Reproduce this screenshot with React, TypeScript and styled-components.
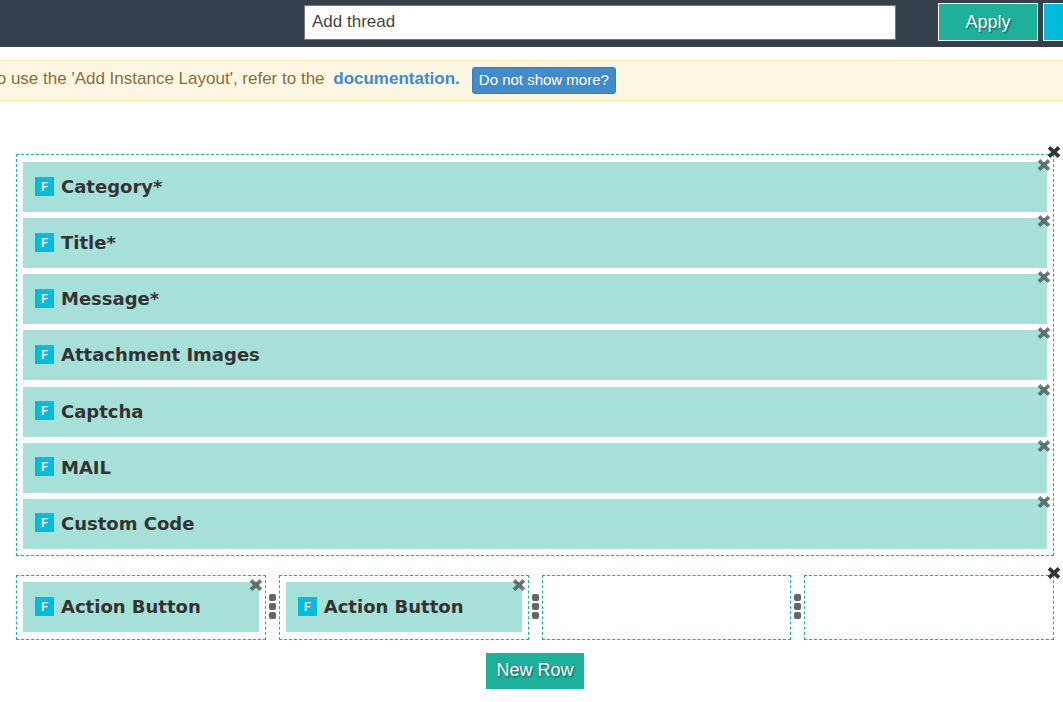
import React from "react";
import styled, { createGlobalStyle } from "styled-components";

const GlobalStyle = createGlobalStyle`
  *, *::before, *::after { box-sizing: border-box; }
  body {
    margin: 0;
    background: #fff;
    color: #333;
    font-family: "Liberation Sans", Arial, sans-serif;
    font-size: 18px;
    line-height: 24px;
    overflow-x: hidden;
  }
  button, input { font: inherit; margin: 0; }
`;

const Header = styled.header`
  display: flex;
  align-items: flex-start;
  height: 47px;
  padding-top: 3px;
  padding-left: 304px;
  background: #35404c;
  overflow: hidden;
`;

const NameInput = styled.input`
  flex: 1;
  min-width: 0;
  height: 35px;
  margin-top: 2px;
  padding: 0 7px 1px;
  border: 1px solid #767676;
  border-radius: 0;
  background: #fff;
  color: #444;
  font-size: 17px;
`;

const Actions = styled.div`
  display: flex;
  gap: 5px;
  width: 125px;
  margin-left: 42px;
  overflow: hidden;
`;

const ActionButton = styled.button<{ $color: string }>`
  flex: none;
  width: 100px;
  height: 38px;
  padding: 0;
  border: 1px solid #fff;
  background: ${(p) => p.$color};
  color: #fff;
  text-shadow: 1px 1px 2px rgba(0, 0, 0, 0.5);
`;

const Notice = styled.div`
  display: flex;
  align-items: center;
  height: 41px;
  margin-top: 13px;
  border: solid #fde6bf;
  border-width: 1px 0;
  background: #fdf6e3;
  color: #8a6d3b;
  font-size: 17px;
  white-space: nowrap;
  overflow: hidden;
`;

const NoticeText = styled.p`
  margin: 0 0 3px -8px;
`;

const DocLink = styled.a`
  margin-left: 4px;
  color: #428bca;
  font-weight: bold;
  text-decoration: none;
`;

const DismissButton = styled.button`
  height: 27px;
  margin-left: 12px;
  padding: 0 6px 2px;
  border: 1px solid #357ebd;
  border-radius: 3px;
  background: #428bca;
  color: #fff;
  font-size: 15px;
  line-height: 24px;
`;

const Canvas = styled.main`
  display: flex;
  flex-direction: column;
  padding: 53px 9px 13px 16px;
`;

const Row = styled.section`
  position: relative;
  display: flex;
  & + & { margin-top: 19px; }
`;

const Column = styled.div<{ $tall?: boolean }>`
  flex: 1 1 0;
  min-width: 0;
  display: flex;
  flex-direction: column;
  justify-content: space-between;
  min-height: ${(p) => (p.$tall ? "402px" : "65px")};
  padding: ${(p) => (p.$tall ? "7px 6px 6px" : "6px 6px 7px")};
  border: 1px dashed #1eb09b;
`;

const FieldCard = styled.div`
  position: relative;
  display: flex;
  align-items: center;
  gap: 7px;
  height: 50px;
  padding: 0 12px;
  background: #a7e0d8;
`;

const Badge = styled.span`
  width: 19px;
  height: 19px;
  margin-bottom: 2px;
  background: #00bbdc;
  color: #fff;
  font: 500 13px/20px Roboto, sans-serif;
  text-align: center;
`;

const FieldName = styled.span`
  color: #333;
  font: bold 18px/24px "DejaVu Sans", Verdana, sans-serif;
  white-space: nowrap;
`;

const RemoveButton = styled.button<{ $level: "row" | "field" }>`
  position: absolute;
  top: ${(p) => (p.$level === "row" ? "-9px" : "-4px")};
  right: ${(p) => (p.$level === "row" ? "-7px" : "-4px")};
  display: flex;
  padding: 0;
  border: 0;
  background: none;
  color: #333;
  opacity: ${(p) => (p.$level === "row" ? 1 : 0.65)};
`;

const Handle = styled.div`
  flex: none;
  display: flex;
  flex-direction: column;
  align-items: center;
  justify-content: center;
  gap: 2px;
  width: 13px;
  padding-bottom: 3px;
`;

const Dot = styled.i`
  width: 7px;
  height: 7px;
  border-radius: 2px;
  background: #666;
`;

const NewRowButton = styled.button`
  align-self: center;
  width: 98px;
  height: 36px;
  margin-top: 13px;
  padding: 0 0 2px;
  border: 0;
  background: #1eb09b;
  color: #fff;
  text-shadow: 1px 1px 2px rgba(0, 0, 0, 0.5);
`;

function Remove({ level, label }: { level: "row" | "field"; label: string }) {
  return (
    <RemoveButton type="button" $level={level} aria-label={label}>
      <svg width="14" height="14" viewBox="0 0 14 14" aria-hidden="true">
        <path d="M2 2.3L12 11.7M12 2.3L2 11.7" stroke="currentColor" strokeWidth="3.8" />
      </svg>
    </RemoveButton>
  );
}

function Field({ name }: { name: string }) {
  return (
    <FieldCard>
      <Badge>F</Badge>
      <FieldName>{name}</FieldName>
      <Remove level="field" label={`Remove ${name}`} />
    </FieldCard>
  );
}

const fields = ["Category*", "Title*", "Message*", "Attachment Images", "Captcha", "MAIL", "Custom Code"];
const buttonColumns = [["Action Button"], ["Action Button"], [], []];

export default function App() {
  return (
    <>
      <GlobalStyle />
      <Header>
        <NameInput aria-label="Layout name" defaultValue="Add thread" />
        <Actions>
          <ActionButton type="button" $color="#1eb09b">Apply</ActionButton>
          <ActionButton type="button" $color="#00bbdc" aria-label="Cancel" />
        </Actions>
      </Header>
      <Notice>
        <NoticeText>
          to use the 'Add Instance Layout', refer to the <DocLink href="#documentation">documentation.</DocLink>
        </NoticeText>
        <DismissButton type="button">Do not show more?</DismissButton>
      </Notice>
      <Canvas>
        <Row>
          <Column $tall>
            {fields.map((name) => (
              <Field key={name} name={name} />
            ))}
          </Column>
          <Remove level="row" label="Remove row" />
        </Row>
        <Row>
          {buttonColumns.map((names, i) => (
            <React.Fragment key={i}>
              {i > 0 && (
                <Handle>
                  <Dot />
                  <Dot />
                  <Dot />
                </Handle>
              )}
              <Column>
                {names.map((name) => (
                  <Field key={name} name={name} />
                ))}
              </Column>
            </React.Fragment>
          ))}
          <Remove level="row" label="Remove row" />
        </Row>
        <NewRowButton type="button">New Row</NewRowButton>
      </Canvas>
    </>
  );
}
